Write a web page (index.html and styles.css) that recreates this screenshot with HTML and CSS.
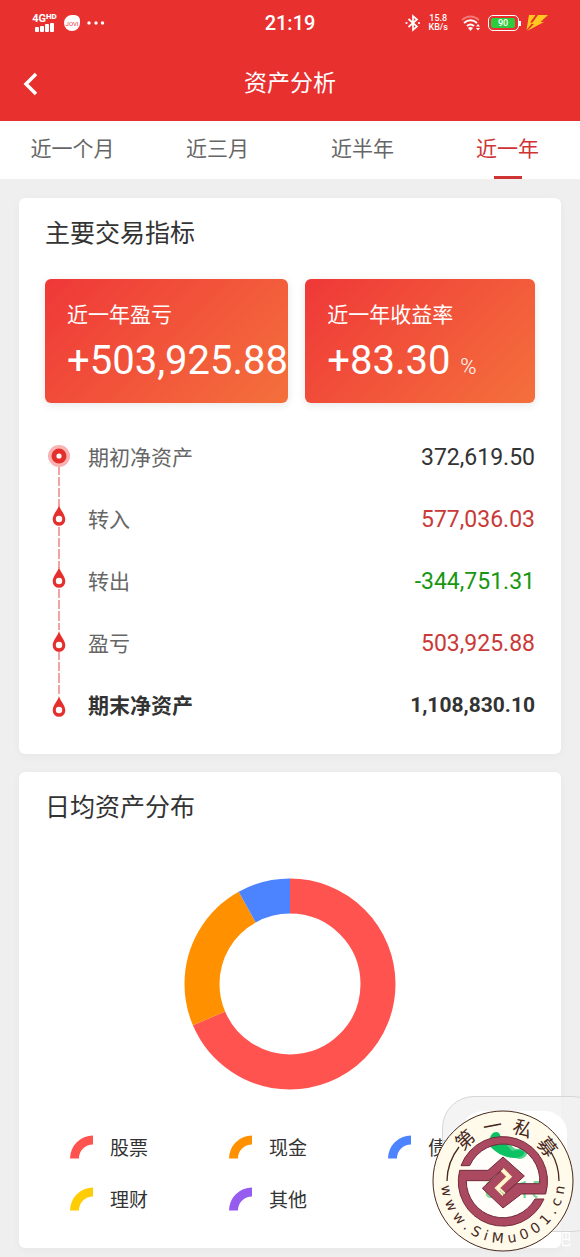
FILE: index.html
```html
<!DOCTYPE html>
<html lang="zh-CN">
<head>
    <meta charset="UTF-8">
    <meta name="viewport" content="width=device-width, initial-scale=1.0">
    <title>资产分析</title>
    <link rel="stylesheet" href="styles.css">
</head>
<body>
<div class="app">
    <header class="header">
        <div class="status-bar">
            <div class="status-left">
                <div class="signal">
                    <span class="network">4G<b>HD</b></span>
                    <svg width="20" height="9" viewBox="0 0 20 9" fill="#fff">
                        <rect x="0" y="4" width="4" height="5" rx="1"/>
                        <rect x="5" y="3" width="4" height="6" rx="1"/>
                        <rect x="10" y="1" width="4" height="8" rx="1"/>
                        <rect x="15" y="0" width="4" height="9" rx="1"/>
                    </svg>
                </div>
                <span class="jovi">JOVI</span>
                <svg width="18" height="4" viewBox="0 0 18 4" fill="#fff">
                    <circle cx="2" cy="2" r="1.7"/><circle cx="9" cy="2" r="1.7"/><circle cx="15.500" cy="2" r="1.7"/>
                </svg>
            </div>
            <span class="clock">21:19</span>
            <div class="status-right">
                <svg class="bluetooth" width="16" height="18" viewBox="0 0 16 18" fill="none" stroke="#fff" stroke-width="1.7">
                    <path d="M3.500 5 12 12.500 8 16V2L12 5.500 3.500 13"/>
                    <circle cx="1.500" cy="9" r="1.100" fill="#fff" stroke="none"/>
                    <circle cx="14" cy="9" r="1.100" fill="#fff" stroke="none"/>
                </svg>
                <span class="speed">15.8<br>KB/s</span>
                <svg class="wifi" width="20" height="18" viewBox="0 0 20 18" fill="none" stroke="#fff" stroke-width="2">
                    <path d="M1 6Q9.500-1 18 6" opacity=".35"/>
                    <path d="M3 9Q9.500 3.500 16 9"/>
                    <path d="M6 12Q9.500 9 13 12"/>
                    <path d="M7 14Q9.500 12 12 14L9.500 17Z" fill="#fff" stroke="none"/>
                    <path d="M15 12.500 17 10 19 12.500ZM15 14 17 16.500 19 14Z" fill="#fff" stroke="none"/>
                </svg>
                <span class="battery"><span class="battery-level">90</span></span>
                <svg width="22" height="18" viewBox="0 0 22 18" fill="#ffc91f">
                    <path d="M3 1H9.500L4 8.500H6.500L.5 16Z"/>
                    <path d="M12 1H22L14.500 8H18L1 17 8 10H5.500Z"/>
                </svg>
            </div>
        </div>
        <div class="nav-bar">
            <button class="back" type="button" aria-label="返回">
                <svg width="16" height="24" viewBox="0 0 16 24" fill="none" stroke="#fff" stroke-width="3.500">
                    <path d="M13 2 3 12 13 22"/>
                </svg>
            </button>
            <h1>资产分析</h1>
        </div>
    </header>

    <nav class="tabs">
        <a href="#month">近一个月</a>
        <a href="#quarter">近三月</a>
        <a href="#half">近半年</a>
        <a href="#year" class="active">近一年</a>
    </nav>

    <main class="content">
        <section class="card">
            <h2>主要交易指标</h2>
            <div class="metrics">
                <div class="metric">
                    <p class="metric-label">近一年盈亏</p>
                    <p class="metric-value">+503,925.88</p>
                </div>
                <div class="metric">
                    <p class="metric-label">近一年收益率</p>
                    <p class="metric-value">+83.30 <small>%</small></p>
                </div>
            </div>
            <ul class="flow">
                <li>
                    <svg width="28" height="62" viewBox="0 0 28 62">
                        <path class="dash" d="M14 40V62"/>
                        <circle cx="14" cy="30" r="11" fill="#f9b3b3"/>
                        <circle cx="14" cy="30" r="7.500" fill="#e42f2d"/>
                        <circle cx="14" cy="30" r="2.600" fill="#fff"/>
                    </svg>
                    <span class="flow-name">期初净资产</span>
                    <span class="flow-value">372,619.50</span>
                </li>
                <li>
                    <svg width="28" height="62" viewBox="0 0 28 62">
                        <path class="dash" d="M14 0V18M14 39V62"/>
                        <path class="drop" d="M14 17C15 22 20.300 26 20.300 31.500A6.300 6.300 0 0 1 7.700 31.500C7.700 26 13 22 14 17Z"/>
                        <circle cx="14" cy="31" r="3.200" fill="#fff"/>
                    </svg>
                    <span class="flow-name">转入</span>
                    <span class="flow-value up">577,036.03</span>
                </li>
                <li>
                    <svg width="28" height="62" viewBox="0 0 28 62">
                        <path class="dash" d="M14 0V18M14 39V62"/>
                        <path class="drop" d="M14 17C15 22 20.300 26 20.300 31.500A6.300 6.300 0 0 1 7.700 31.500C7.700 26 13 22 14 17Z"/>
                        <circle cx="14" cy="31" r="3.200" fill="#fff"/>
                    </svg>
                    <span class="flow-name">转出</span>
                    <span class="flow-value down">-344,751.31</span>
                </li>
                <li>
                    <svg width="28" height="62" viewBox="0 0 28 62">
                        <path class="dash" d="M14 0V18M14 39V62"/>
                        <path class="drop" d="M14 19C15 24 20.300 28 20.300 33.500A6.300 6.300 0 0 1 7.700 33.500C7.700 28 13 24 14 19Z"/>
                        <circle cx="14" cy="33" r="3.200" fill="#fff"/>
                    </svg>
                    <span class="flow-name">盈亏</span>
                    <span class="flow-value up">503,925.88</span>
                </li>
                <li class="total">
                    <svg width="28" height="62" viewBox="0 0 28 62">
                        <path class="dash" d="M14 0V22"/>
                        <path class="drop" d="M14 22C15 27 20.300 31 20.300 36.500A6.300 6.300 0 0 1 7.700 36.500C7.700 31 13 27 14 22Z"/>
                        <circle cx="14" cy="36" r="3.200" fill="#fff"/>
                    </svg>
                    <span class="flow-name">期末净资产</span>
                    <span class="flow-value">1,108,830.10</span>
                </li>
            </ul>
        </section>

        <section class="card">
            <h2>日均资产分布</h2>
            <svg class="donut" width="212" height="212" viewBox="0 0 212 212" fill="none" stroke-width="35">
                <g transform="rotate(-90 106 106)">
                    <circle cx="106" cy="106" r="88" pathLength="1000" stroke="#ff5350" stroke-dasharray="686 314"/>
                    <circle cx="106" cy="106" r="88" pathLength="1000" stroke="#ff9000" stroke-dasharray="233 767" stroke-dashoffset="-686"/>
                    <circle cx="106" cy="106" r="88" pathLength="1000" stroke="#4c83ff" stroke-dasharray="81 919" stroke-dashoffset="-919"/>
                </g>
            </svg>
            <ul class="legend">
                <li><svg class="stock" width="24" height="24" viewBox="0 0 24 24"><path d="M0 23.500A23 23 0 0 1 23 .5V9.500A14 14 0 0 0 9 23.500Z"/></svg><span>股票</span></li>
                <li><svg class="cash" width="24" height="24" viewBox="0 0 24 24"><path d="M0 23.500A23 23 0 0 1 23 .5V9.500A14 14 0 0 0 9 23.500Z"/></svg><span>现金</span></li>
                <li><svg class="bond" width="24" height="24" viewBox="0 0 24 24"><path d="M0 23.500A23 23 0 0 1 23 .5V9.500A14 14 0 0 0 9 23.500Z"/></svg><span>债券</span></li>
                <li><svg class="fund" width="24" height="24" viewBox="0 0 24 24"><path d="M0 23.500A23 23 0 0 1 23 .5V9.500A14 14 0 0 0 9 23.500Z"/></svg><span>理财</span></li>
                <li><svg class="other" width="24" height="24" viewBox="0 0 24 24"><path d="M0 23.500A23 23 0 0 1 23 .5V9.500A14 14 0 0 0 9 23.500Z"/></svg><span>其他</span></li>
            </ul>
        </section>
    </main>

    <!-- floating call bubble -->
    <div class="call">
        <div class="call-inner">
            <svg width="30" height="30" viewBox="0 0 30 30" fill="#0cc263">
                <path d="M4 1C8 0 9 3 9 7C8 10 8 12 12 15C15 19 18 20 21 18C25 18 29 20 28 24C26 29 20 31 13 26C5 21-2 7 4 1Z"/>
            </svg>
            <span>04:15</span>
        </div>
    </div>
    <span class="forum">贴吧</span>

    <!-- site seal -->
    <svg class="seal" width="142" height="142" viewBox="0 0 142 142">
        <defs>
            <path id="seal-top" d="M22 71A49 49 0 0 1 120 71"/>
            <path id="seal-bottom" d="M9 71A62 62 0 0 0 133 71"/>
        </defs>
        <path d="M71 1A70 70 0 1 1 71 141A70 70 0 1 1 71 1ZM71 33A38 38 0 1 0 71 109A38 38 0 1 0 71 33Z" fill="#fffaea"/>
        <circle cx="71" cy="71" r="38" fill="#fffdf0" fill-opacity=".3"/>
        <path d="M58 36C56 24 63 20 67 23L71 31 80 41C92 38 95 42 90 46C82 51 66 46 58 36Z" fill="#0cc263"/>
        <circle cx="71" cy="71" r="70" fill="none" stroke="#47281d"/>
        <path d="M15 71A56 56 0 0 1 27 37M119 42A56 56 0 0 1 127 71" fill="none" stroke="#47281d" stroke-width="1.300"/>
        <g transform="translate(71 71) scale(.3333) translate(-250 -304)" fill="#aa4960" stroke="#712a3b" stroke-width="3">
            <path d="M124 258A134 134 0 0 1 378 343H305L250 385 188 326 245 273 263 291 228 325 250 347 290 312H360A110 110 0 0 0 150 258Z"/>
            <path d="M120 272H205L250 232 314 289 256 342 239 325 274 291 250 267 208 303H140A110 110 0 0 0 346 358H373A134 134 0 0 1 120 272Z"/>
            <path d="M245 273 263 291 228 325 250 347M256 342 239 325 274 291 250 267" fill="none" stroke="#fff2bd" stroke-width="5"/>
        </g>
        <text class="seal-name"><textPath href="#seal-top" startOffset="31"><tspan dx="0 8 8 8">第一私募</tspan></textPath></text>
        <text class="seal-url"><textPath href="#seal-bottom" startOffset="5"><tspan dx="0 5 5 5 5 5 5 5 5 5 5 5 5 5">www.SiMu001.cn</tspan></textPath></text>
    </svg>
</div>
</body>
</html>
```
FILE: styles.css
```css
* {
    box-sizing: border-box;
}

body {
    margin: 0;
    background: #efefef;
    color: #333;
    font-family: Roboto, "Noto Sans CJK SC", sans-serif;
}

h1, h2, p, ul {
    margin: 0;
    padding: 0;
    font-weight: 400;
}

ul {
    list-style: none;
}

svg {
    display: block;
    flex-shrink: 0;
}

.app {
    position: relative;
    overflow: hidden;
}

.header {
    background: #e8302f;
    color: #fff;
}

.status-bar {
    display: grid;
    grid-template-columns: 1fr auto 1fr;
    align-items: center;
    height: 46px;
    padding: 0 32px;
}

.status-left,
.status-right {
    display: flex;
    align-items: center;
    gap: 7px;
}

.status-right {
    justify-content: flex-end;
}

.signal {
    display: flex;
    flex-direction: column;
    align-items: center;
    width: 25px;
}

.network {
    display: flex;
    font-size: 11px;
    line-height: 9px;
    font-weight: 700;
}

.network b {
    font-size: 8px;
    line-height: 6px;
}

.jovi {
    width: 16px;
    height: 16px;
    border-radius: 9px 6px 9px 9px;
    background: #fff;
    color: #e8302f;
    font-size: 6px;
    line-height: 17px;
    text-align: center;
}

.clock {
    font-size: 20px;
    line-height: 24px;
    font-weight: 500;
}

.speed {
    font-size: 9px;
    line-height: 9px;
    font-weight: 500;
    text-align: center;
}

.wifi {
    margin-left: 6px;
}

.battery {
    position: relative;
    width: 31px;
    height: 16px;
    padding: 2px;
    border: 1px solid #fff;
    border-radius: 5px;
}

.battery::after {
    content: "";
    position: absolute;
    top: 5px;
    right: -3px;
    width: 2px;
    height: 5px;
    background: #fff;
}

.battery-level {
    display: block;
    width: 24px;
    border-radius: 2px;
    background: #2dcc3e;
    font-size: 9px;
    line-height: 10px;
    font-weight: 500;
    text-align: center;
}

.nav-bar {
    display: grid;
    grid-template-columns: 60px 1fr 60px;
    align-items: center;
    height: 75px;
}

.back {
    margin-left: 23px;
    padding: 0;
    width: 24px;
    border: 0;
    background: none;
    cursor: pointer;
}

.nav-bar h1 {
    font-size: 23px;
    line-height: 32px;
    text-align: center;
}

.tabs {
    display: grid;
    grid-template-columns: repeat(4, 1fr);
    background: #fff;
}

.tabs a {
    display: flex;
    flex-direction: column;
    align-items: center;
    height: 58px;
    padding-top: 12px;
    color: #666;
    font-size: 21px;
    line-height: 32px;
    text-decoration: none;
}

.tabs .active {
    color: #cf3434;
}

.tabs .active::after {
    content: "";
    width: 28px;
    height: 3px;
    margin-top: auto;
    background: #cf3434;
}

.content {
    display: flex;
    flex-direction: column;
    gap: 18px;
    padding: 19px 19px 9px;
}

.card {
    padding: 18px 26px;
    border-radius: 6px;
    background: #fff;
    box-shadow: 0 2px 10px rgba(0, 0, 0, 0.04);
}

.card h2 {
    font-size: 25px;
    line-height: 36px;
}

.metrics {
    display: grid;
    grid-template-columns: 18fr 17fr;
    gap: 17px;
    margin-top: 27px;
}

.metric {
    min-width: 0;
    height: 124px;
    padding: 20px 0 0 22px;
    border-radius: 6px;
    background: linear-gradient(135deg, #ef3838, #f4703c);
    box-shadow: 0 2px 8px rgba(0, 0, 0, 0.1);
    color: #fff;
}

.metric-label {
    font-size: 21px;
    line-height: 32px;
}

.metric-value {
    font-size: 40px;
    line-height: 60px;
    white-space: nowrap;
}

.metric-value small {
    font-size: 22px;
    font-weight: 300;
}

.flow {
    margin-top: 23px;
}

.flow li {
    display: flex;
    align-items: center;
    height: 62px;
}

.flow-name {
    margin-left: 15px;
    padding-bottom: 2px;
    color: #666;
    font-size: 21px;
}

.flow-value {
    margin-left: auto;
    font-size: 23px;
}

.dash {
    stroke: #f3a3a3;
    stroke-width: 2;
    stroke-dasharray: 9 2;
}

.drop {
    fill: #e42f2d;
}

.up {
    color: #c93a38;
}

.down {
    color: #18960f;
}

.total .flow-name,
.total .flow-value {
    color: #333;
    font-size: 21px;
    font-weight: 700;
}

.donut {
    margin: 52px auto 0;
}

.legend {
    display: grid;
    grid-template-columns: repeat(3, 1fr);
    margin: 31px -12px 5px 25px;
}

.legend li {
    display: flex;
    align-items: center;
    gap: 16px;
    height: 52px;
    font-size: 19px;
}

.legend span {
    padding-bottom: 2px;
}

.stock { fill: #ff5350; }
.cash { fill: #ff9000; }
.bond { fill: #4c83ff; }
.fund { fill: #ffcd05; }
.other { fill: #965bef; }

.call {
    position: absolute;
    right: -24px;
    bottom: 25px;
    padding: 14px 36px 14px 18px;
    border: 1px solid #d6d6d6;
    border-radius: 32px;
    background: rgba(241, 241, 241, 0.8);
}

.call-inner {
    display: flex;
    flex-direction: column;
    align-items: center;
    width: 106px;
    height: 106px;
    padding-top: 19px;
    border-radius: 22px;
    background: #fff;
    color: #35ca78;
    font-size: 24px;
    line-height: 28px;
}

.call-inner span {
    margin-top: 16px;
}

.forum {
    position: absolute;
    right: 9px;
    bottom: 5px;
    color: #fff;
    font-size: 16px;
    line-height: 24px;
}

.seal {
    position: absolute;
    right: 6px;
    bottom: 5px;
}

.seal-name {
    fill: #47281d;
    font-size: 19px;
}

.seal-url {
    fill: #47281d;
    font-family: "DejaVu Sans", sans-serif;
    font-size: 14px;
}
```
